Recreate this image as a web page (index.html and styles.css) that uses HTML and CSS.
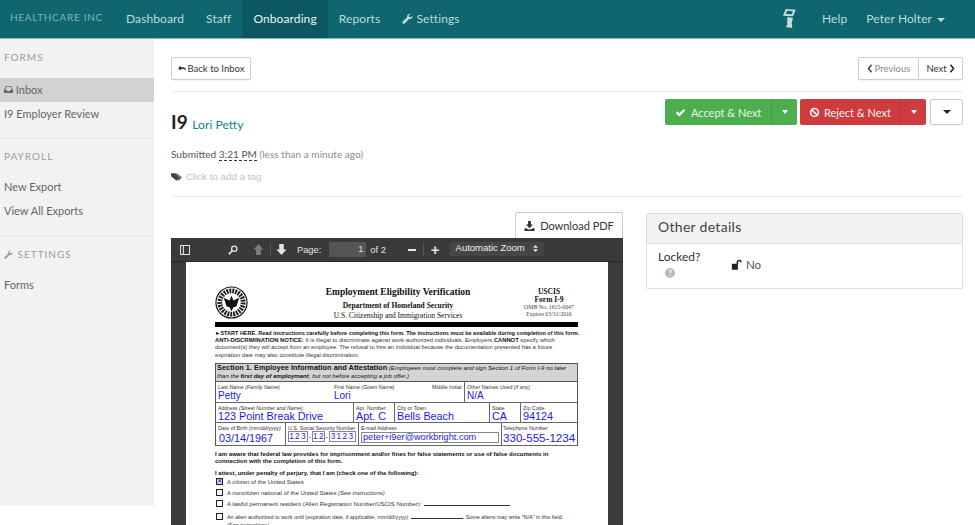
FILE: index.html
```html
<!DOCTYPE html>
<html lang="en">
<head>
    <meta charset="UTF-8">
    <title>I9 - Lori Petty</title>
    <link rel="stylesheet" href="styles.css">
</head>
<body>
    <nav class="topnav">
        <span class="brand">HEALTHCARE INC</span>
        <a class="nav-link">Dashboard</a>
        <a class="nav-link">Staff</a>
        <a class="nav-link active">Onboarding</a>
        <a class="nav-link">Reports</a>
        <a class="nav-link"><svg class="icon" viewBox="0 0 16 16"><path d="M15.300 4.200c.2 1.500-.3 2.900-1.400 3.900-1.100.9-2.500 1.200-3.800.8L4 15.200c-.8.8-2 .8-2.800 0s-.8-2 0-2.800l6.300-6.100C7.100 5 7.400 3.500 8.400 2.400 9.400 1.300 10.900.8 12.300 1L9.800 3.500l.5 2.200 2.200.5z"/></svg> Settings</a>
        <span class="nav-spacer"></span>
        <svg class="scanner" viewBox="0 0 13 19"><path d="M2.700 0l10 .7L10 7.300 0 6.700zM4.300 1.700L2.700 5l6 .3 1.300-3z" fill-rule="evenodd"/><path d="M4.300 8L10 9l-1.300 5 .6 5-6.600-1 1.600-2.300z"/></svg>
        <a class="nav-link help">Help</a>
        <a class="nav-link user">Peter Holter <span class="caret"></span></a>
    </nav>

    <div class="layout">
        <aside class="sidebar">
            <section class="side-group">
                <h4>FORMS</h4>
                <a class="side-link current"><svg class="icon" viewBox="0 0 16 14"><path d="M3 1h10l3 7v5H0V8zm1 1.500L2 8h3l1 2h4l1-2h3l-2-5.500z" fill-rule="evenodd"/></svg> Inbox</a>
                <a class="side-link">I9 Employer Review</a>
            </section>
            <section class="side-group">
                <h4>PAYROLL</h4>
                <a class="side-link">New Export</a>
                <a class="side-link">View All Exports</a>
            </section>
            <section class="side-group">
                <h4><svg class="icon" viewBox="0 0 16 16"><path d="M15.300 4.200c.2 1.500-.3 2.900-1.400 3.900-1.100.9-2.500 1.200-3.800.8L4 15.200c-.8.8-2 .8-2.800 0s-.8-2 0-2.800l6.300-6.100C7.100 5 7.400 3.500 8.400 2.400 9.400 1.300 10.900.8 12.300 1L9.800 3.500l.5 2.200 2.200.5z"/></svg> SETTINGS</h4>
                <a class="side-link">Forms</a>
            </section>
        </aside>

        <main class="content">
            <div class="top-row">
                <a class="btn btn-small back"><svg class="icon" viewBox="0 0 14 10"><path d="M5 0v3h4c3 0 5 2 5 6-1-2-3-3-5-3H5v3L0 4.500z"/></svg> Back to Inbox</a>
                <div class="pager">
                    <a class="btn btn-small muted"><svg class="chev" viewBox="0 0 8 12"><path d="M6 1L2 6l4 5" fill="none" stroke="#444" stroke-width="2"/></svg> Previous</a><a class="btn btn-small">Next <svg class="chev" viewBox="0 0 8 12"><path d="M2 1l4 5-4 5" fill="none" stroke="#222" stroke-width="2"/></svg></a>
                </div>
            </div>

            <div class="head-row">
                <h2 class="title">I9 <a>Lori Petty</a></h2>
                <div class="actions">
                    <div class="split green">
                        <a><svg class="icon" viewBox="0 0 14 12"><path d="M1 6.500l2-2 2.500 2.500L11 1.500l2 2-7.500 7.500z"/></svg><span>Accept &amp; Next</span></a>
                        <i><span class="caret"></span></i>
                    </div>
                    <div class="split red">
                        <a><svg class="icon" viewBox="0 0 14 14"><circle cx="7" cy="7" r="5" fill="none" stroke="#fff" stroke-width="2"/><path d="M3.500 3.500l7 7" stroke="#fff" stroke-width="2"/></svg><span>Reject &amp; Next</span></a>
                        <i><span class="caret"></span></i>
                    </div>
                    <a class="btn more"><span class="caret"></span></a>
                </div>
            </div>

            <p class="submitted">Submitted <span class="time">3:21 PM</span> <span class="ago">(less than a minute ago)</span></p>
            <p class="tag"><svg class="icon" viewBox="0 0 16 12"><path d="M0 1h6l6 5.500L7.500 11 0 5zM8 1l6.500 5.500L10 11 9 10l3.500-3.500L7 1z" fill-rule="evenodd"/></svg> Click to add a tag</p>

            <div class="columns">
                <div class="doc-col">
                    <a class="btn download"><svg class="icon" viewBox="0 0 14 14"><path d="M5 0h4v5h3L7 10 2 5h3zM0 10h3l2 2h4l2-2h3v4H0z"/></svg> Download PDF</a>
                    <div class="viewer">
                        <div class="pdf-bar">
                            <svg class="pdf-icon sidebar-toggle" viewBox="0 0 12 12"><path d="M.500.500h11v11H.500zM4 1v10" fill="none" stroke="#e4e4e4" stroke-width="1.300"/></svg>
                            <svg class="pdf-icon find" viewBox="0 0 12 12"><circle cx="7.500" cy="4.500" r="3.200" fill="none" stroke="#e4e4e4" stroke-width="1.600"/><path d="M5 7l-4 4" stroke="#e4e4e4" stroke-width="2"/></svg>
                            <svg class="pdf-icon up" viewBox="0 0 12 12"><path d="M6 0l5.500 6H8.500v6h-5V6H.500z" fill="#7d7d7d"/></svg>
                            <span class="pdf-sep"></span>
                            <svg class="pdf-icon down" viewBox="0 0 12 12"><path d="M6 12L.500 6h3V0h5v6h3z" fill="#e4e4e4"/></svg>
                            <span class="pdf-label">Page:</span>
                            <span class="pdf-input">1</span>
                            <span class="pdf-of">of 2</span>
                            <span class="pdf-minus"></span>
                            <span class="pdf-sep zoom-sep"></span>
                            <span class="pdf-plus">+</span>
                            <span class="pdf-zoom">Automatic Zoom <svg class="updown" viewBox="0 0 5 7"><path d="M2.500 0L5 2.700H0zM2.500 7L0 4.300h5z" fill="#e4e4e4"/></svg></span>
                        </div>
                        <div class="sheet">
                            <div class="form-head">
                                <svg class="seal" viewBox="0 0 34 34"><circle cx="17" cy="17" r="16" fill="#fff" stroke="#111" stroke-width="1.200"/><circle cx="17" cy="17" r="12" fill="none" stroke="#222" stroke-width="5" stroke-dasharray="2 1"/><path d="M9 12l6 3 2-5 2 5 6-3-3 9-3 1-2 4-2-4-3-1z" fill="#111"/></svg>
                                <div class="form-title">
                                    <strong class="big">Employment Eligibility Verification</strong>
                                    <strong>Department of Homeland Security</strong>
                                    <span>U.S. Citizenship and Immigration Services</span>
                                </div>
                                <div class="form-id">
                                    <strong>USCIS<br>Form I-9</strong>
                                    <small>OMB No. 1615-0047<br>Expires 03/31/2016</small>
                                </div>
                            </div>
                            <div class="black-rule"></div>
                            <p class="fine"><b class="wide">&#9658;START HERE. <span>Read instructions carefully before completing this form. The instructions must be available during completion of this form.</span></b><br>
                            <b>ANTI-DISCRIMINATION NOTICE:</b> It is illegal to discriminate against work-authorized individuals. Employers <b>CANNOT</b> specify which<br>document(s) they will accept from an employee. The refusal to hire an individual because the documentation presented has a future<br>expiration date may also constitute illegal discrimination.</p>
                            <div class="sec-table">
                                <div class="sec-head"><b>Section 1. Employee Information and Attestation</b> <i>(Employees must complete and sign Section 1 of Form I-9 no later<br>than the <b>first day of employment</b>, but not before accepting a job offer.)</i></div>
                                <div class="sec-row r1">
                                    <div class="cell name"><div class="name-labels"><label>Last Name <i>(Family Name)</i></label><label>First Name <i>(Given Name)</i></label><label>Middle Initial</label></div><div class="name-vals"><em>Petty</em><em>Lori</em></div></div>
                                    <div class="cell other"><label>Other Names Used <i>(if any)</i></label><em>N/A</em></div>
                                </div>
                                <div class="sec-row r2">
                                    <div class="cell addr"><label>Address <i>(Street Number and Name)</i></label><em>123 Point Break Drive</em></div>
                                    <div class="cell apt"><label>Apt. Number</label><em>Apt. C</em></div>
                                    <div class="cell city"><label>City or Town</label><em>Bells Beach</em></div>
                                    <div class="cell state"><label>State</label><em>CA</em></div>
                                    <div class="cell zip"><label>Zip Code</label><em>94124</em></div>
                                </div>
                                <div class="sec-row r3">
                                    <div class="cell dob"><label>Date of Birth <i>(mm/dd/yyyy)</i></label><em>03/14/1967</em></div>
                                    <div class="cell ssn"><label>U.S. Social Security Number</label><div class="ssn-boxes"><em class="w20">123</em><span>-</span><em class="w12">12</em><span>-</span><em class="w28">3123</em></div></div>
                                    <div class="cell mail"><label>E-mail Address</label><em>peter+i9er@workbright.com</em></div>
                                    <div class="cell tel"><label>Telephone Number</label><em>330-555-1234</em></div>
                                </div>
                            </div>
                            <p class="aware">I am aware that federal law provides for imprisonment and/or fines for false statements or use of false documents in<br>connection with the completion of this form.</p>
                            <p class="aware attest">I attest, under penalty of perjury, that I am (check one of the following):</p>
                            <ul class="checks">
                                <li><span class="box checked">&#10005;</span>A citizen of the United States</li>
                                <li><span class="box"></span>A noncitizen national of the United States&nbsp;<i>(See instructions)</i></li>
                                <li><span class="box"></span>A lawful permanent resident (Alien Registration Number/USCIS Number):&nbsp;<u></u></li>
                                <li class="tight"><span class="box"></span>An alien authorized to work until (expiration date, if applicable, mm/dd/yyyy)&nbsp;<u class="short"></u>. Some aliens may write "N/A" in this field.</li>
                                <li class="see"><i>(See instructions)</i></li>
                            </ul>
                        </div>
                    </div>
                </div>

                <div class="panel">
                    <div class="panel-head">Other details</div>
                    <div class="panel-body">
                        <div class="locked-label">Locked?<span class="help-dot">?</span></div>
                        <div class="locked-val"><svg class="icon" viewBox="0 0 14 12"><path d="M1 5h7v7H1zM6.500 5V3.500C6.500 1.500 8 .500 9.700.500s3 1 3 3h-1.800c0-.8-.5-1.300-1.200-1.300S8.300 2.700 8.300 3.500V5z"/></svg> No</div>
                    </div>
                </div>
            </div>
        </main>
    </div>
</body>
</html>
```

FILE: styles.css
```css
* {
    box-sizing: border-box;
}

html, body {
    height: 525px;
    overflow: hidden;
}

body {
    margin: 0;
    font-family: Lato, "Open Sans", sans-serif;
    font-size: 12px;
    color: #333;
    background-color: #fff;
}

.icon {
    width: 12px;
    height: 12px;
    fill: currentColor;
    vertical-align: -1px;
}

.caret {
    display: inline-block;
    width: 0;
    height: 0;
    border-left: 4px solid transparent;
    border-right: 4px solid transparent;
    border-top: 4px solid currentColor;
    vertical-align: 2px;
}

/* top nav */
.topnav {
    display: flex;
    align-items: stretch;
    height: 39px;
    background-color: #0f666f;
    border-bottom: 1px solid #8fb8bb;
    color: #bfdadc;
    font-size: 12px;
    letter-spacing: 0.1px;
}

.brand {
    width: 115px;
    padding-left: 10px;
    line-height: 35px;
    font-size: 10px;
    letter-spacing: 0.7px;
    color: #7fb5b9;
}

.nav-link {
    padding: 0 11px;
    line-height: 37px;
}

.nav-link.active {
    background-color: #0c5860;
    color: #eaf3f3;
}

.nav-link .icon {
    width: 11px;
    height: 11px;
}

.nav-spacer {
    flex: 1;
}

.scanner {
    width: 13px;
    height: 19px;
    margin: 9px 15px 0 0;
    fill: #c6e0e2;
}

.help {
    padding: 0 8px 0 11px;
}

.user {
    padding: 0 30px 0 11px;
}

.user .caret {
    margin-left: 2px;
    vertical-align: 1px;
    border-top-width: 4px;
}

/* sidebar */
.layout {
    display: flex;
    height: 486px;
    align-items: flex-start;
}

.sidebar {
    flex: 0 0 154px;
    height: 467px;
    background-color: #f2f2f2;
}

.side-group {
    padding-bottom: 12px;
    border-bottom: 2px solid #ececec;
}

.side-group:first-child {
    padding-bottom: 11px;
}

.side-group:last-child {
    border-bottom: 0;
}

.side-group h4 {
    margin: 0;
    padding: 0 4px;
    height: 36px;
    line-height: 34px;
    font-size: 10px;
    font-weight: 400;
    letter-spacing: 1px;
    color: #9c9c9c;
}

.side-group:first-child h4 {
    height: 39px;
    line-height: 36px;
}

.side-group h4 .icon {
    width: 9px;
    height: 9px;
    margin-right: 1px;
    vertical-align: -0.500px;
}

.side-link {
    display: block;
    height: 24px;
    line-height: 23px;
    padding-left: 4px;
    font-size: 11px;
    color: #666;
}

.side-link .icon {
    width: 9px;
    height: 9px;
    vertical-align: 0;
}

.side-link.current {
    background-color: #d2d2d2;
}

/* main */
.content {
    flex: 1;
    padding: 18px 12px 0 17px;
    min-width: 0;
}

.top-row {
    display: flex;
    justify-content: space-between;
    height: 35px;
    border-bottom: 1px solid #eee;
}

.btn {
    display: inline-flex;
    align-items: center;
    justify-content: center;
    background-color: #fff;
    border: 1px solid #ccc;
    border-radius: 2px;
    box-shadow: 0 1px 1px rgba(0, 0, 0, 0.05);
    color: #333;
}

.btn-small {
    height: 23px;
    padding: 0 5px;
    font-size: 9.500px;
    gap: 2px;
}

.back {
    width: 80px;
}

.btn-small .icon {
    width: 8px;
    height: 7px;
}

.pager {
    display: flex;
}

.pager .btn:first-child {
    border-right: 0;
    border-radius: 2px 0 0 2px;
    width: 60px;
}

.pager .btn:last-child {
    border-radius: 0 2px 2px 0;
    width: 45px;
}

.muted {
    color: #8a8a8a;
}

.chev {
    width: 6px;
    height: 9px;
}

.head-row {
    display: flex;
    justify-content: space-between;
    height: 53px;
    padding-top: 7px;
}

.title {
    margin: 12px 0 0;
    font-size: 19px;
    font-weight: 700;
    line-height: 22px;
    color: #222;
}

.title a {
    font-size: 12.200px;
    font-weight: 400;
    color: #12838e;
}

.actions {
    display: flex;
    height: 26px;
}

.split {
    display: flex;
    height: 26px;
    border-radius: 2px;
    color: #eaf5ea;
    font-size: 11px;
}

.split a {
    display: flex;
    align-items: center;
    gap: 5px;
    padding-left: 10px;
}

.split i {
    display: flex;
    align-items: center;
    justify-content: center;
    width: 26px;
    border-left: 1px solid rgba(0, 0, 0, 0.1);
}

.split .caret {
    color: #fff;
    border-width: 4px 3.500px 0;
    border-left-color: transparent;
    border-right-color: transparent;
    vertical-align: 0;
}

.split .icon {
    width: 11px;
    height: 11px;
    color: #fff;
}

.green {
    width: 132px;
    background-color: #4cae4c;
}

.green a {
    width: 106px;
}

.red {
    width: 126px;
    margin-left: 3px;
    background-color: #cf3c3f;
}

.red a {
    width: 100px;
    gap: 4px;
    padding-left: 9px;
}

.more {
    width: 33px;
    height: 26px;
    margin-left: 4px;
    color: #222;
}

.submitted {
    margin: 0;
    height: 22px;
    line-height: 18px;
    font-size: 10.100px;
    color: #555;
}

.time {
    border-bottom: 1px dashed #333;
}

.ago {
    color: #8c8c8c;
}

.tag {
    margin: 0;
    height: 30px;
    padding-top: 2px;
    line-height: 16px;
    font-family: "Liberation Sans", sans-serif;
    font-size: 9.800px;
    color: #c2c2c2;
    border-bottom: 1px solid #eee;
}

.tag .icon {
    color: #444;
    width: 12px;
    height: 10px;
    vertical-align: -1.500px;
}

.columns {
    display: flex;
    justify-content: space-between;
    align-items: flex-start;
    padding-top: 15px;
}

.doc-col {
    width: 452px;
    display: flex;
    flex-direction: column;
    align-items: flex-end;
}

.download {
    width: 108px;
    height: 26px;
    gap: 5px;
    font-size: 11px;
    border-bottom: 0;
    border-radius: 2px 2px 0 0;
    box-shadow: none;
}

.download .icon {
    width: 11px;
    height: 10px;
    vertical-align: 0;
}

/* pdf viewer */
.viewer {
    width: 452px;
    height: 300px;
    background-color: #3c3c3c;
    overflow: hidden;
}

.pdf-bar {
    display: flex;
    align-items: center;
    height: 23px;
    background-color: #3a3a3a;
    font-family: "Liberation Sans", sans-serif;
    font-size: 9.300px;
    color: #e2e2e2;
    box-shadow: 0 1px 2px rgba(0, 0, 0, 0.4);
}

.pdf-icon {
    width: 10px;
    height: 10px;
    flex: none;
}

.sidebar-toggle {
    margin-left: 9px;
}

.find {
    margin-left: 38px;
}

.up {
    width: 11px;
    height: 11px;
    margin-left: 15px;
}

.down {
    width: 11px;
    height: 11px;
}

.pdf-sep {
    width: 1px;
    height: 13px;
    margin: 0 5px 0 6px;
    background-color: #555;
}

.pdf-label {
    margin-left: 10px;
}

.pdf-input {
    width: 37px;
    height: 15px;
    margin-left: 8px;
    padding-right: 3px;
    text-align: right;
    line-height: 15px;
    background-color: #555;
    border-radius: 1px;
}

.pdf-of {
    margin-left: 4px;
}

.pdf-minus {
    width: 8px;
    height: 2px;
    margin-left: 22px;
    background-color: #e4e4e4;
}

.zoom-sep {
    margin: 0 7px;
}

.pdf-plus {
    font-size: 15px;
    font-weight: 700;
    line-height: 15px;
}

.pdf-zoom {
    display: flex;
    justify-content: space-between;
    width: 94px;
    height: 14px;
    margin: 0 0 1px 10px;
    padding: 0 6px;
    line-height: 11px;
    font-size: 9.500px;
    color: #f0f0f0;
    background-color: #454545;
    border-radius: 1px;
}

.updown {
    width: 5px;
    height: 7px;
    margin-top: 3px;
}

.sheet {
    width: 422px;
    height: 280px;
    margin: 1px 0 0 15px;
    padding: 24px 30px 0 29px;
    background-color: #fff;
    color: #111;
    font-family: "Liberation Sans", sans-serif;
    overflow: hidden;
}

.form-head {
    display: flex;
    height: 36px;
    font-family: "Liberation Serif", serif;
}

.seal {
    flex: none;
    width: 33px;
    height: 33px;
}

.form-title {
    width: 230px;
    margin-left: 35px;
    display: flex;
    flex-direction: column;
    align-items: center;
    font-size: 7.500px;
    line-height: 9.500px;
}

.form-title strong.big {
    font-size: 9.500px;
    line-height: 13px;
    margin-bottom: 2px;
    white-space: nowrap;
}

.form-title span {
    white-space: nowrap;
}

.form-id {
    width: 58px;
    margin: 2px 0 0 7px;
    text-align: center;
    font-size: 7.500px;
    line-height: 8px;
    white-space: nowrap;
}

.form-id strong {
    display: block;
}

.form-id small {
    display: block;
    font-size: 5.800px;
    line-height: 7px;
    color: #444;
}

.black-rule {
    height: 5px;
    background-color: #000;
}

.fine {
    margin: 3px 0 0;
    font-size: 5.800px;
    line-height: 7.200px;
    color: #333;
    white-space: nowrap;
}

.fine b {
    color: #111;
}

.fine .wide {
    font-size: 5.500px;
}

.sec-table {
    height: 83px;
    margin-top: 4px;
    border: 1px solid #555;
    border-bottom-width: 0;
}

.sec-head {
    height: 18px;
    padding: 0 1px;
    background-color: #d4d4d4;
    font-size: 6.050px;
    line-height: 8px;
    white-space: nowrap;
    border-bottom: 1px solid #555;
}

.sec-head > b {
    font-size: 7.400px;
}

.sec-row {
    display: flex;
    border-bottom: 1px solid #666;
}

.r1 {
    height: 21px;
}

.r2 {
    height: 20px;
}

.r3 {
    height: 23px;
}

.cell {
    padding: 2px 2px 0;
    border-right: 1px solid #666;
    overflow: hidden;
}

.cell:last-child {
    border-right: 0;
}

.cell label {
    display: block;
    font-size: 5.300px;
    line-height: 6px;
    white-space: nowrap;
    color: #333;
}

.cell em {
    display: block;
    font-style: normal;
    font-size: 10px;
    line-height: 12px;
    color: #1a1ae6;
    white-space: nowrap;
}

.name {
    width: 249px;
}

.other {
    flex: 1;
}

.name-labels, .name-vals {
    display: flex;
}

.name-labels label:nth-child(1), .name-vals em:nth-child(1) {
    width: 116px;
}

.name-labels label:nth-child(2) {
    width: 98px;
}

.r1 em {
    margin-top: 0.500px;
    line-height: 11px;
}

.r2 em {
    font-size: 10.800px;
    line-height: 11px;
}

.addr {
    width: 138px;
}

.apt {
    width: 41px;
}

.city {
    width: 95px;
}

.state {
    width: 31px;
}

.zip {
    flex: 1;
}

.dob {
    width: 70px;
}

.dob em {
    padding-left: 1px;
    font-size: 10.800px;
    margin-top: 1px;
}

.ssn {
    width: 73px;
}

.ssn-boxes {
    display: flex;
    justify-content: space-between;
    align-items: center;
    font-size: 7px;
    color: #1a1ae6;
}

.ssn-boxes em {
    border: 1px solid #888;
    font-size: 8.300px;
    letter-spacing: 1.300px;
    line-height: 9px;
    text-align: center;
}

.w20 {
    width: 20px;
}

.w12 {
    width: 13px;
}

.w28 {
    width: 27px;
}

.mail {
    width: 143px;
}

.mail label {
    margin-bottom: 1px;
}

.mail em {
    font-size: 9.200px;
    line-height: 9px;
    border: 1px solid #888;
    padding-left: 1px;
}

.tel {
    flex: 1;
    padding-left: 1px;
}

.tel em {
    font-size: 11.600px;
    margin-top: 1px;
}

.aware {
    margin: 5.500px 0 0;
    font-size: 6.050px;
    line-height: 7px;
    font-weight: 700;
    white-space: nowrap;
}

.attest {
    margin-top: 5px;
}

.checks {
    margin: -1px 0 0;
    padding: 0;
    list-style: none;
    font-size: 6px;
    color: #333;
    white-space: nowrap;
}

.checks li {
    display: flex;
    align-items: center;
    height: 11px;
}

.box {
    flex: none;
    width: 7px;
    height: 7px;
    margin: 0 4px 0 1px;
    border: 1px solid #222;
    font-size: 6px;
    line-height: 5px;
    text-align: center;
}

.box.checked {
    color: #1a1ae6;
    background-color: #c9d2f5;
}

.checks u {
    display: inline-block;
    width: 86px;
    height: 5px;
    margin-left: 1px;
    border-bottom: 1px solid #333;
}

.checks u.short {
    width: 52px;
}

.checks .tight {
    font-size: 5.430px;
    margin-top: 2px;
}

.checks .see {
    height: 6px;
    padding-left: 12px;
    font-size: 5.400px;
}

/* other details panel */
.panel {
    width: 317px;
    height: 76px;
    margin-top: 1px;
    border: 1px solid #ddd;
    border-radius: 2px;
}

.panel-head {
    height: 30px;
    padding-left: 11px;
    line-height: 26px;
    font-size: 14px;
    letter-spacing: 0.3px;
    color: #444;
    background-color: #f2f2f2;
    border-bottom: 1px solid #ddd;
}

.panel-body {
    display: flex;
    padding: 5px 11px;
}

.locked-label {
    width: 73px;
    font-size: 12px;
    line-height: 15px;
    color: #333;
}

.help-dot {
    display: block;
    width: 10px;
    height: 10px;
    margin: 4px 0 0 7px;
    border-radius: 50%;
    background-color: #b5bcc2;
    color: #fff;
    font-size: 7px;
    font-weight: 700;
    line-height: 10px;
    text-align: center;
}

.locked-val {
    margin-top: 8px;
    font-size: 11.500px;
    line-height: 15px;
    color: #555;
}

.locked-val .icon {
    width: 12px;
    height: 11px;
    color: #222;
    vertical-align: -0.500px;
}
```
